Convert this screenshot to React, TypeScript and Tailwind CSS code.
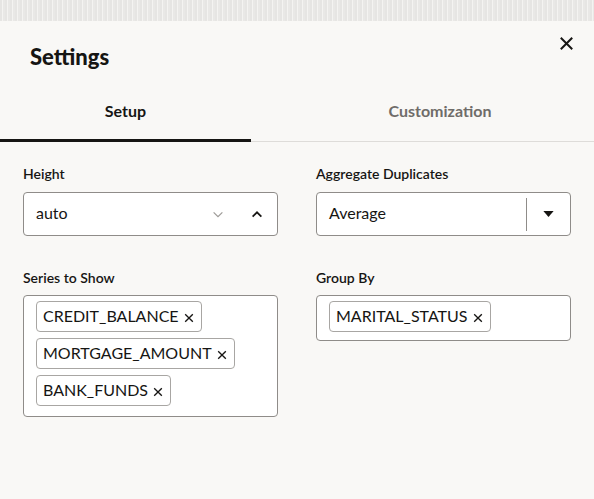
import React from "react";

function XIcon({ className = "" }: { className?: string }) {
  return (
    <svg viewBox="0 0 12 12" className={className} fill="none" stroke="currentColor" strokeWidth="1.6" strokeLinecap="square">
      <path d="M2 2 L10 10 M10 2 L2 10" />
    </svg>
  );
}

function Chip({ label }: { label: string }) {
  return (
    <div className="inline-flex h-[31px] items-center rounded-[4px] border border-[#a8a6a3] bg-white pl-[6px] pr-[7px] text-[16px] text-[#161513]">
      <span className="pb-[1px]">{label}</span>
      <XIcon className="ml-[5px] mt-[2px] h-[10px] w-[10px]" />
    </div>
  );
}

export default function App() {
  return (
    <div className="flex h-[499px] w-[594px] flex-col overflow-hidden bg-[#f9f8f6] text-[#161513]" style={{ fontFamily: "Lato, 'Liberation Sans', sans-serif" }}>
      <div className="h-[21px] w-full bg-[#ebeae8] bg-[repeating-linear-gradient(90deg,#e6e5e3_0px,#e6e5e3_2px,#f4f3f1_2px,#f4f3f1_3px,#e9e8e6_3px,#e9e8e6_5px)]" />
      <div className="flex items-start justify-between pl-[30px] pr-[20px]">
        <h1 className="mt-[23px] text-[22px] font-black leading-[26px]">Settings</h1>
        <XIcon className="mt-[15px] h-[15px] w-[15px] text-[#161513]" />
      </div>
      <div className="mt-[31px] flex">
        <div className="flex w-[251px] flex-col items-center">
          <span className="text-[16px] font-bold leading-[20px]">Setup</span>
          <div className="mt-[18px] h-[3px] w-full bg-[#161513]" />
        </div>
        <div className="flex flex-1 flex-col">
          <span className="pl-[35px] text-center text-[16px] font-bold leading-[20px] text-[#6f6c69]">Customization</span>
          <div className="mt-[20px] h-[1px] w-full bg-[#dedcd9]" />
        </div>
      </div>
      <div className="mt-[23px] grid grid-cols-[255px_255px] gap-x-[38px] px-[23px]">
        <div>
          <div className="text-[14px] font-semibold leading-[18px]">Height</div>
          <div className="mt-[9px] flex h-[44px] items-center rounded-[4px] border border-[#8f8c89] bg-white pl-[12px] pr-[14px] text-[16px]">
            <span className="flex-1 pb-[2px]">auto</span>
            <svg viewBox="0 0 12 8" className="mr-[27px] h-[7px] w-[12px] text-[#9e9b98]" fill="none" stroke="currentColor" strokeWidth="1.4">
              <path d="M1 1.5 L6 6.5 L11 1.5" />
            </svg>
            <svg viewBox="0 0 12 8" className="h-[7px] w-[12px] text-[#161513]" fill="none" stroke="currentColor" strokeWidth="2">
              <path d="M1 6.5 L6 1.5 L11 6.5" />
            </svg>
          </div>
        </div>
        <div>
          <div className="text-[14px] font-semibold leading-[18px]">Aggregate Duplicates</div>
          <div className="mt-[9px] flex h-[44px] items-center rounded-[4px] border border-[#8f8c89] bg-white pl-[12px] text-[16px]">
            <span className="flex-1 pb-[2px]">Average</span>
            <div className="h-[33px] w-[1px] bg-[#8f8c89]" />
            <div className="flex w-[43px] justify-center">
              <svg viewBox="0 0 12 7" className="h-[6px] w-[11px] text-[#161513]" fill="currentColor">
                <path d="M0 0 L12 0 L6 7 Z" />
              </svg>
            </div>
          </div>
        </div>
        <div className="mt-[33px]">
          <div className="text-[14px] font-semibold leading-[18px]">Series to Show</div>
          <div className="mt-[8px] flex flex-col items-start gap-[6px] rounded-[4px] border border-[#8f8c89] bg-white pb-[10px] pl-[12px] pt-[5px]">
            <Chip label="CREDIT_BALANCE" />
            <Chip label="MORTGAGE_AMOUNT" />
            <Chip label="BANK_FUNDS" />
          </div>
        </div>
        <div className="mt-[33px]">
          <div className="text-[14px] font-semibold leading-[18px]">Group By</div>
          <div className="mt-[8px] flex flex-col items-start rounded-[4px] border border-[#8f8c89] bg-white pb-[8px] pl-[12px] pt-[5px]">
            <Chip label="MARITAL_STATUS" />
          </div>
        </div>
      </div>
    </div>
  );
}
